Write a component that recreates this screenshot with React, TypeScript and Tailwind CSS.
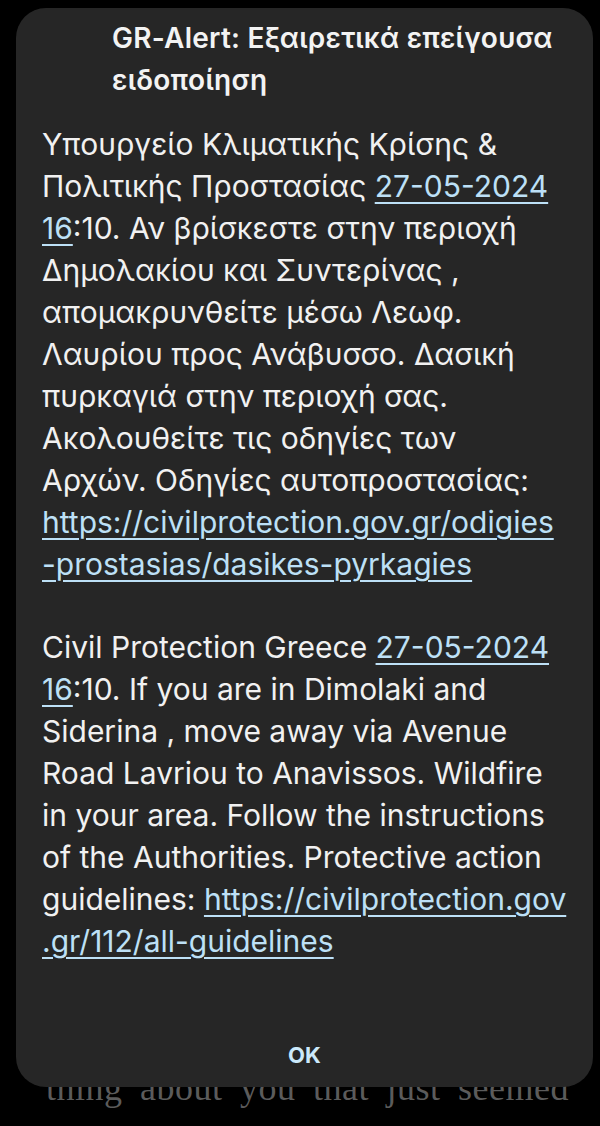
import React from 'react';

// Κείμενο ειδοποίησης, γραμμή προς γραμμή όπως φαίνεται στο τηλέφωνο
type Part = { text: string; link?: boolean };
type Line = Part[];

const greekLines: Line[] = [
    [{ text: 'Υπουργείο Κλιματικής Κρίσης &' }],
    [{ text: 'Πολιτικής Προστασίας ' }, { text: '27-05-2024', link: true }],
    [{ text: '16', link: true }, { text: ':10. Αν βρίσκεστε στην περιοχή' }],
    [{ text: 'Δημολακίου και Συντερίνας ,' }],
    [{ text: 'απομακρυνθείτε μέσω Λεωφ.' }],
    [{ text: 'Λαυρίου προς Ανάβυσσο. Δασική' }],
    [{ text: 'πυρκαγιά στην περιοχή σας.' }],
    [{ text: 'Ακολουθείτε τις οδηγίες των' }],
    [{ text: 'Αρχών. Οδηγίες αυτοπροστασίας:' }],
    [{ text: 'https://civilprotection.gov.gr/odigies', link: true }],
    [{ text: '-prostasias/dasikes-pyrkagies', link: true }],
];

const englishLines: Line[] = [
    [{ text: 'Civil Protection Greece ' }, { text: '27-05-2024', link: true }],
    [{ text: '16', link: true }, { text: ':10. If you are in Dimolaki and' }],
    [{ text: 'Siderina , move away via Avenue' }],
    [{ text: 'Road Lavriou to Anavissos. Wildfire' }],
    [{ text: 'in your area. Follow the instructions' }],
    [{ text: 'of the Authorities. Protective action' }],
    [{ text: 'guidelines: ' }, { text: 'https://civilprotection.gov', link: true }],
    [{ text: '.gr/112/all-guidelines', link: true }],
];

function Paragraph({ lines }: { lines: Line[] }) {
    return (
        <div className="text-[30px] leading-[42px] text-[#f1f1f1] whitespace-nowrap">
            {lines.map((line, i) => (
                <div key={i}>
                    {line.map((part, j) =>
                        part.link ? (
                            <span
                                key={j}
                                className="text-[#bde0f6] underline decoration-[2px] underline-offset-[5px]"
                            >
                                {part.text}
                            </span>
                        ) : (
                            <span key={j}>{part.text}</span>
                        )
                    )}
                </div>
            ))}
        </div>
    );
}

export default function App() {
    return (
        <div
            className="w-[600px] h-[1126px] bg-black overflow-hidden"
            style={{ fontFamily: 'Inter, Roboto, "Noto Sans", sans-serif' }}
        >
            {/* παράθυρο ειδοποίησης */}
            <div className="relative z-10 ml-[16px] mr-[7px] mt-[8px] h-[1079px] rounded-[30px] bg-[#262626] flex flex-col">
                <div className="pt-[9px] pl-[96px] text-[28px] leading-[42px] font-semibold tracking-[0.25px] text-[#f3f3f3]">
                    GR-Alert: Εξαιρετικά επείγουσα
                    <br />
                    ειδοποίηση
                </div>

                <div className="pl-[26px] mt-[22px]">
                    <Paragraph lines={greekLines} />
                    <div className="mt-[41px]">
                        <Paragraph lines={englishLines} />
                    </div>
                </div>

                <div className="mt-auto pb-[18px] flex justify-center">
                    <button className="text-[22px] leading-[28px] font-bold text-[#cbe9fb]">OK</button>
                </div>
            </div>

            {/* κείμενο βιβλίου πίσω από το παράθυρο */}
            <div
                className="-mt-[19px] pl-[46px] text-[36px] leading-[40px] text-[#5b5b5b] whitespace-nowrap tracking-[0.5px]"
                style={{ fontFamily: '"Liberation Serif", serif', wordSpacing: '8px' }}
            >
                thing about you that just seemed
            </div>
        </div>
    );
}
